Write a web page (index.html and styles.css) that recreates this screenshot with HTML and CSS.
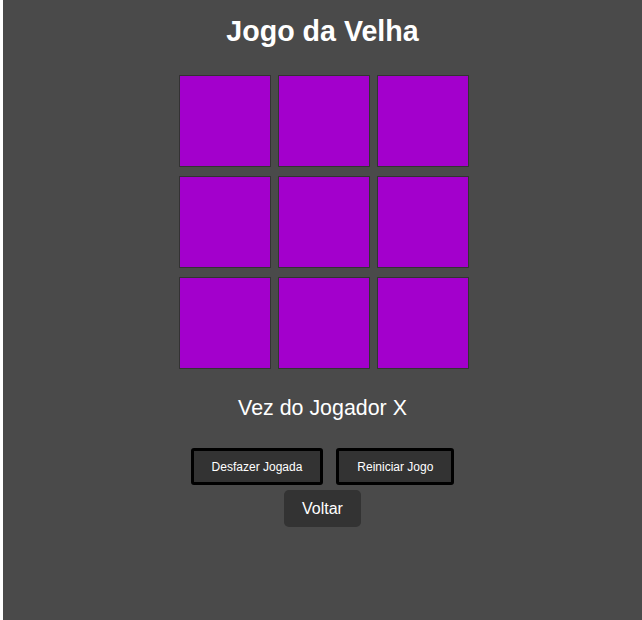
FILE: index.html
```html
<!DOCTYPE html>
<html lang="pt">
<head>
<meta charset="utf-8">
<title>Jogo da Velha</title>
<link rel="stylesheet" href="styles.css">
</head>
<body>
<main class="page">
  <h1 class="title">Jogo da Velha</h1>
  <div class="board">
    <div class="cell"></div>
    <div class="cell"></div>
    <div class="cell"></div>
    <div class="cell"></div>
    <div class="cell"></div>
    <div class="cell"></div>
    <div class="cell"></div>
    <div class="cell"></div>
    <div class="cell"></div>
  </div>
  <p class="status">Vez do Jogador X</p>
  <div class="actions">
    <button class="btn-outline">Desfazer Jogada</button>
    <button class="btn-outline">Reiniciar Jogo</button>
  </div>
  <button class="btn-back">Voltar</button>
</main>
</body>
</html>
```
FILE: styles.css
```css
html, body {
  margin: 0;
  padding: 0;
  background: #ffffff;
}

body {
  font-family: "Liberation Sans", Arial, sans-serif;
}

.page {
  margin: 0 0 0 3px;
  min-height: 620px;
  background: #4a4a4a;
  color: #ffffff;
  display: flex;
  flex-direction: column;
  align-items: center;
  padding-top: 15px;
  box-sizing: border-box;
}

.title {
  margin: 0;
  font-size: 28.6px;
  line-height: 32px;
  font-weight: bold;
}

.board {
  margin: 28px 0 0 3px;
  display: grid;
  grid-template-columns: repeat(3, 92px);
  grid-template-rows: repeat(3, 92px);
  column-gap: 7px;
  row-gap: 9px;
}

.cell {
  background: #a300cc;
  border: 1px solid #333333;
  box-sizing: border-box;
}

.status {
  margin: 27px 0 0;
  font-size: 21.4px;
  line-height: 25px;
}

.actions {
  margin-top: 27px;
  display: flex;
  gap: 13px;
}

.btn-outline {
  height: 37px;
  box-sizing: border-box;
  padding: 0 18px;
  background: #333333;
  color: #ffffff;
  border: 3px solid #000000;
  border-radius: 3px;
  font-family: "Liberation Sans", Arial, sans-serif;
  font-size: 12px;
}

.btn-back {
  margin-top: 5px;
  height: 37px;
  box-sizing: border-box;
  padding: 0 18px;
  background: #333333;
  color: #ffffff;
  border: none;
  border-radius: 5px;
  font-family: "Liberation Sans", Arial, sans-serif;
  font-size: 16px;
}
```
